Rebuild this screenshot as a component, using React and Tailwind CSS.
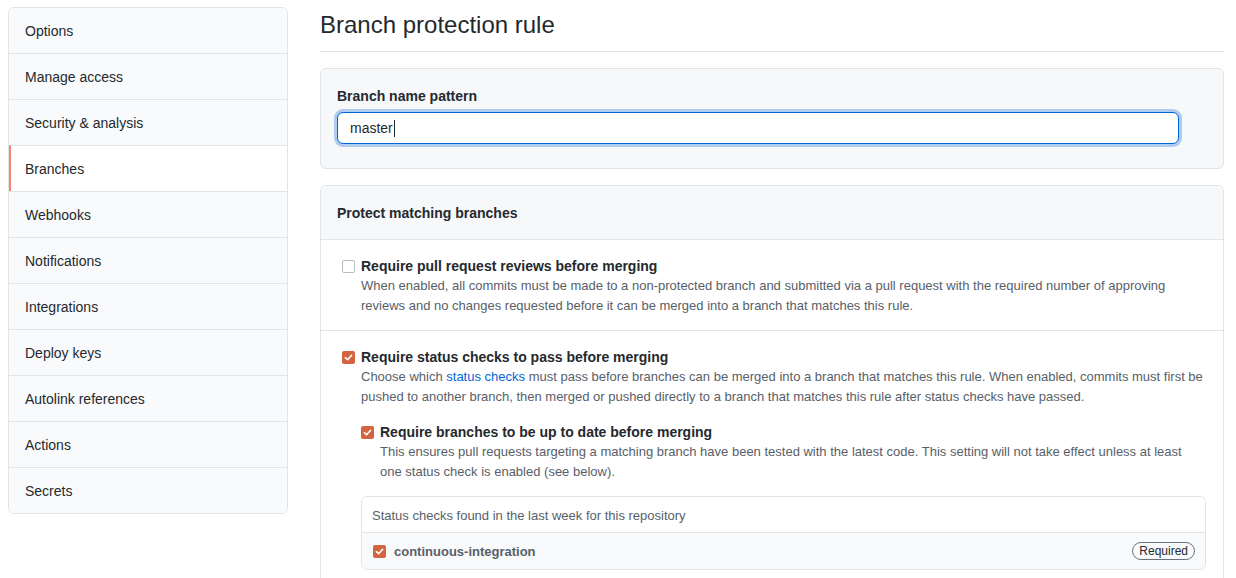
import React from "react";

const items = [
  "Options",
  "Manage access",
  "Security & analysis",
  "Branches",
  "Webhooks",
  "Notifications",
  "Integrations",
  "Deploy keys",
  "Autolink references",
  "Actions",
  "Secrets",
];

function Check({ checked }) {
  if (!checked) {
    return (
      <span className="mt-[4px] inline-block h-[13px] w-[13px] shrink-0 rounded-[2px] border border-[#b8bcc1] bg-white" />
    );
  }
  return (
    <span className="mt-[4px] flex h-[13px] w-[13px] shrink-0 items-center justify-center rounded-[2px] bg-[#d2643f]">
      <svg width="9" height="9" viewBox="0 0 10 10" fill="none">
        <path d="M1.5 5.2 L4 7.5 L8.5 2.5" stroke="white" strokeWidth="1.8" strokeLinecap="round" strokeLinejoin="round" />
      </svg>
    </span>
  );
}

export default function App() {
  return (
    <div className="flex min-h-[578px] bg-white font-['Liberation_Sans',Arial,sans-serif] text-[#24292e]">
      <div className="ml-2 mt-[7px] w-[280px] shrink-0">
        <div className="overflow-hidden rounded-md border border-[#e1e4e8]">
          {items.map((it, i) => (
            <div
              key={it}
              className={
                "flex h-[45px] box-content items-center text-sm " +
                (i > 0 ? "border-t border-[#e1e4e8] " : "") +
                (it === "Branches"
                  ? "border-l-2 border-l-[#f9826c] bg-white pl-[14px]"
                  : "bg-[#f9fafb] pl-4")
              }
            >
              {it}
            </div>
          ))}
        </div>
      </div>

      <div className="ml-8 mr-3 flex-1">
        <div className="border-b border-[#e1e4e8] pb-[11px] pt-[10px]">
          <h1 className="text-2xl font-normal leading-[30px]">Branch protection rule</h1>
        </div>

        <div className="mt-4 rounded-md border border-[#e1e4e8] bg-[#f6f8fa] px-4 pb-6 pt-[17px]">
          <div className="text-sm font-bold leading-[20px]">Branch name pattern</div>
          <div className="mt-[6px] pr-[28px]">
            <div className="flex h-[32px] items-center rounded-md border border-[#0366d6] bg-white px-3 text-sm shadow-[0_0_0_3px_rgba(3,102,214,0.3)]">
              master<span className="ml-[1px] inline-block h-[17px] w-px bg-[#24292e]" />
            </div>
          </div>
        </div>

        <div className="mt-4 rounded-md border border-[#e1e4e8]">
          <div className="flex h-[54px] items-center rounded-t-md border-b border-[#e1e4e8] bg-[#f6f8fa] px-4 text-sm font-bold">
            Protect matching branches
          </div>

          <div className="flex gap-[6px] border-b border-[#e1e4e8] pl-[21px] pr-4 pb-[14px] pt-[16px]">
            <Check checked={false} />
            <div>
              <div className="text-sm font-bold leading-[20px]">Require pull request reviews before merging</div>
              <p className="text-[13px] leading-[20px] text-[#586069]">
                When enabled, all commits must be made to a non-protected branch and submitted via a pull request with the required number of approving reviews and no changes requested before it can be merged into a branch that matches this rule.
              </p>
            </div>
          </div>

          <div className="flex gap-[6px] pl-[21px] pr-4 pt-[16px] pb-4">
            <Check checked />
            <div className="flex-1">
              <div className="text-sm font-bold leading-[20px]">Require status checks to pass before merging</div>
              <p className="text-[13px] leading-[20px] text-[#586069]">
                Choose which <span className="text-[#0366d6]">status checks</span> must pass before branches can be merged into a branch that matches this rule. When enabled, commits must first be pushed to another branch, then merged or pushed directly to a branch that matches this rule after status checks have passed.
              </p>

              <div className="mt-[15px] flex gap-[6px] pr-[12px]">
                <Check checked />
                <div>
                  <div className="text-sm font-bold leading-[20px]">Require branches to be up to date before merging</div>
                  <p className="text-[13px] leading-[20px] text-[#586069]">
                    This ensures pull requests targeting a matching branch have been tested with the latest code. This setting will not take effect unless at least one status check is enabled (see below).
                  </p>
                </div>
              </div>

              <div className="mt-[14px] mr-[1px] overflow-hidden rounded-md border border-[#e1e4e8]">
                <div className="flex h-[36px] items-center border-b border-[#e1e4e8] bg-white px-[10px] pt-[2px] text-[13px] text-[#586069]">
                  Status checks found in the last week for this repository
                </div>
                <div className="flex h-[36px] items-center gap-[8px] bg-[#f9fafb] pl-[11px] pr-[10px]">
                  <span className="-mt-[4px] flex">
                    <Check checked />
                  </span>
                  <span className="mt-[2px] text-[13px] font-bold text-[#586069]">continuous-integration</span>
                  <span className="ml-auto rounded-full border border-[#6a737d] px-[6px] text-xs leading-[16px] text-[#24292e]">
                    Required
                  </span>
                </div>
              </div>
            </div>
          </div>
        </div>
      </div>
    </div>
  );
}
